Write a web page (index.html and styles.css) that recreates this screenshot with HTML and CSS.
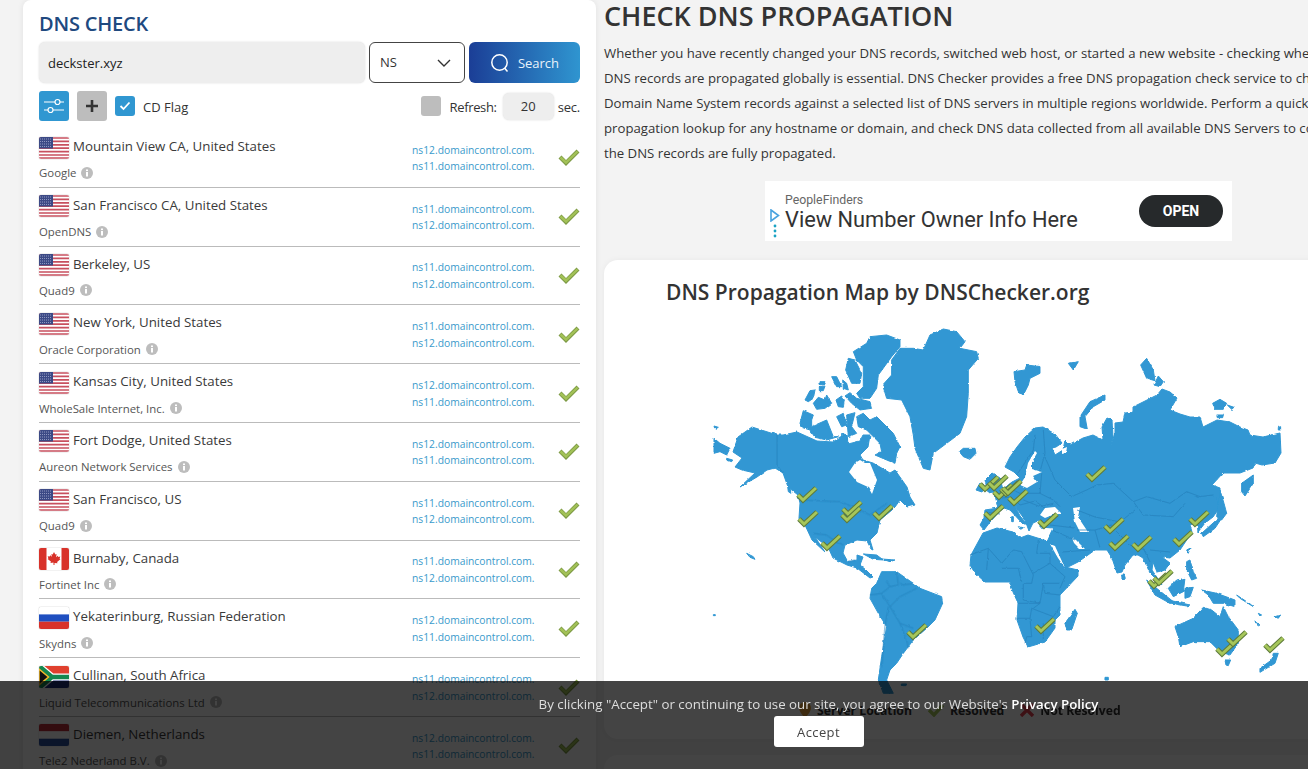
FILE: index.html
```html
<!DOCTYPE html>
<html lang="en">
<head>
<meta charset="utf-8">
<title>DNS Checker</title>
<link rel="stylesheet" href="styles.css">
</head>
<body>
<svg class="defs" width="0" height="0" aria-hidden="true">
  <defs>
    <filter id="rough" x="-2%" y="-2%" width="104%" height="104%">
      <feTurbulence type="fractalNoise" baseFrequency=".22" numOctaves="2" seed="4" result="n"/>
      <feDisplacementMap in="SourceGraphic" in2="n" scale="2.4" xChannelSelector="R" yChannelSelector="G"/>
    </filter>
    <symbol id="us" viewBox="0 0 30 22" preserveAspectRatio="none">
      <rect width="30" height="22" fill="#fff"/>
      <path d="M0 1h30M0 4.4h30M0 7.800h30M0 11.200h30M0 14.600h30M0 18h30M0 21h30" stroke="#c8505f" stroke-width="1.700"/>
      <rect width="14" height="11.500" fill="#3c4a86"/>
      <path d="M1 2h12M1 4.500h12M1 7h12M1 9.500h12" stroke="#8f97c0" stroke-width="1" stroke-dasharray="1 1"/>
    </symbol>
    <symbol id="ca" viewBox="0 0 30 22" preserveAspectRatio="none">
      <rect width="30" height="22" fill="#fff"/>
      <rect width="7.500" height="22" fill="#d8322a"/>
      <rect x="22.500" width="7.500" height="22" fill="#d8322a"/>
      <path d="M15 4l1.300 2.600 1.300-.6-.5 3.200 1.700-1.500.5 1.200 2-.3-.7 2.200.8.500-3.300 2.600.4 1.400-3-.4V17h-1v-2.500l-3 .4.400-1.400-3.300-2.600.8-.5-.7-2.200 2 .3.500-1.200 1.700 1.500L12.400 6l1.300.6z" fill="#d8322a"/>
    </symbol>
    <symbol id="ru" viewBox="0 0 30 22" preserveAspectRatio="none">
      <rect width="30" height="7.400" fill="#fff"/>
      <rect y="7.400" width="30" height="7.300" fill="#1f4fc0"/>
      <rect y="14.700" width="30" height="7.300" fill="#d8322a"/>
    </symbol>
    <symbol id="za" viewBox="0 0 30 22" preserveAspectRatio="none">
      <rect width="30" height="11" fill="#e0402e"/>
      <rect y="11" width="30" height="11" fill="#1c2f78"/>
      <path d="M0 0l13 11L0 22M13 11h17" fill="none" stroke="#fff" stroke-width="7"/>
      <path d="M0 0l13 11L0 22M13 11h17" fill="none" stroke="#14874f" stroke-width="4.500"/>
      <path d="M0 3l9.500 8L0 19z" fill="#111" stroke="#f0b92c" stroke-width="1.500"/>
    </symbol>
    <symbol id="nl" viewBox="0 0 30 22" preserveAspectRatio="none">
      <rect width="30" height="7.400" fill="#c0303a"/>
      <rect y="7.400" width="30" height="7.300" fill="#fff"/>
      <rect y="14.700" width="30" height="7.300" fill="#2a4f9c"/>
    </symbol>
    <symbol id="info" viewBox="0 0 12 12">
      <circle cx="6" cy="6" r="6" fill="#bdbdbd"/>
      <rect x="5" y="5" width="2" height="4.500" fill="#fff"/>
      <rect x="5" y="2.500" width="2" height="1.600" fill="#fff"/>
    </symbol>
    <symbol id="ok" viewBox="0 0 22 18">
      <path d="M2 9l6 6L20 3" fill="none" stroke="#7d9a45" stroke-width="4.200"/>
      <path d="M2.500 9.500l5.500 5L19.500 3.500" fill="none" stroke="#a3c257" stroke-width="2.400"/>
    </symbol>
    <g id="mk">
      <path d="M-9 1l5 5L9-6" fill="none" stroke="#5d7a3a" stroke-width="5"/>
      <path d="M-9 1l5 5L9-6" fill="none" stroke="#a6c65a" stroke-width="3"/>
    </g>
  </defs>
</svg>

<div class="page">
  <aside class="panel">
    <h2 class="panel-title">DNS CHECK</h2>
    <div class="search">
      <div class="field">deckster.xyz</div>
      <div class="select">NS
        <svg class="chev" width="14" height="8" viewBox="0 0 14 8"><path d="M1 1l6 6 6-6" fill="none" stroke="#333" stroke-width="1.400"/></svg>
      </div>
      <div class="go">
        <svg width="20" height="20" viewBox="0 0 20 20"><circle cx="9.500" cy="9.500" r="7.700" fill="none" stroke="#fff" stroke-width="1.500"/><path d="M14.500 15l3 3.500" stroke="#fff" stroke-width="1.500"/></svg>
        <span>Search</span>
      </div>
    </div>
    <div class="tools">
      <div class="tbtn blue">
        <svg width="20" height="16" viewBox="0 0 20 16"><path d="M0 4h11M16 4h4M0 12h4M9 12h11" stroke="#fff" stroke-width="1.200"/><circle cx="13.500" cy="4" r="2.500" fill="none" stroke="#fff" stroke-width="1.200"/><circle cx="6.500" cy="12" r="2.500" fill="none" stroke="#fff" stroke-width="1.200"/></svg>
      </div>
      <div class="tbtn grey">
        <svg width="14" height="14" viewBox="0 0 14 14"><path d="M7 1v12M1 7h12" stroke="#333" stroke-width="2.600"/></svg>
      </div>
      <div class="check on">
        <svg width="12" height="10" viewBox="0 0 12 10"><path d="M1.500 5l3 3 6-6.500" fill="none" stroke="#fff" stroke-width="1.800"/></svg>
      </div>
      <span class="cd">CD Flag</span>
      <div class="check off"></div>
      <span class="refresh">Refresh:</span>
      <div class="secs">20</div>
      <span class="sec">sec.</span>
    </div>

    <div class="row"><div class="loc"><svg class="flag"><use href="#us"/></svg><span class="city">Mountain View CA, United States</span></div><div class="prov">Google <svg class="i"><use href="#info"/></svg></div><div class="ns">ns12.domaincontrol.com.<br>ns11.domaincontrol.com.</div><svg class="tick"><use href="#ok"/></svg></div>
    <div class="row"><div class="loc"><svg class="flag"><use href="#us"/></svg><span class="city">San Francisco CA, United States</span></div><div class="prov">OpenDNS <svg class="i"><use href="#info"/></svg></div><div class="ns">ns11.domaincontrol.com.<br>ns12.domaincontrol.com.</div><svg class="tick"><use href="#ok"/></svg></div>
    <div class="row"><div class="loc"><svg class="flag"><use href="#us"/></svg><span class="city">Berkeley, US</span></div><div class="prov">Quad9 <svg class="i"><use href="#info"/></svg></div><div class="ns">ns11.domaincontrol.com.<br>ns12.domaincontrol.com.</div><svg class="tick"><use href="#ok"/></svg></div>
    <div class="row"><div class="loc"><svg class="flag"><use href="#us"/></svg><span class="city">New York, United States</span></div><div class="prov">Oracle Corporation <svg class="i"><use href="#info"/></svg></div><div class="ns">ns11.domaincontrol.com.<br>ns12.domaincontrol.com.</div><svg class="tick"><use href="#ok"/></svg></div>
    <div class="row"><div class="loc"><svg class="flag"><use href="#us"/></svg><span class="city">Kansas City, United States</span></div><div class="prov">WholeSale Internet, Inc. <svg class="i"><use href="#info"/></svg></div><div class="ns">ns12.domaincontrol.com.<br>ns11.domaincontrol.com.</div><svg class="tick"><use href="#ok"/></svg></div>
    <div class="row"><div class="loc"><svg class="flag"><use href="#us"/></svg><span class="city">Fort Dodge, United States</span></div><div class="prov">Aureon Network Services <svg class="i"><use href="#info"/></svg></div><div class="ns">ns12.domaincontrol.com.<br>ns11.domaincontrol.com.</div><svg class="tick"><use href="#ok"/></svg></div>
    <div class="row"><div class="loc"><svg class="flag"><use href="#us"/></svg><span class="city">San Francisco, US</span></div><div class="prov">Quad9 <svg class="i"><use href="#info"/></svg></div><div class="ns">ns11.domaincontrol.com.<br>ns12.domaincontrol.com.</div><svg class="tick"><use href="#ok"/></svg></div>
    <div class="row"><div class="loc"><svg class="flag"><use href="#ca"/></svg><span class="city">Burnaby, Canada</span></div><div class="prov">Fortinet Inc <svg class="i"><use href="#info"/></svg></div><div class="ns">ns11.domaincontrol.com.<br>ns12.domaincontrol.com.</div><svg class="tick"><use href="#ok"/></svg></div>
    <div class="row"><div class="loc"><svg class="flag"><use href="#ru"/></svg><span class="city">Yekaterinburg, Russian Federation</span></div><div class="prov">Skydns <svg class="i"><use href="#info"/></svg></div><div class="ns">ns12.domaincontrol.com.<br>ns11.domaincontrol.com.</div><svg class="tick"><use href="#ok"/></svg></div>
    <div class="row"><div class="loc"><svg class="flag"><use href="#za"/></svg><span class="city">Cullinan, South Africa</span></div><div class="prov">Liquid Telecommunications Ltd <svg class="i"><use href="#info"/></svg></div><div class="ns">ns11.domaincontrol.com.<br>ns12.domaincontrol.com.</div><svg class="tick"><use href="#ok"/></svg></div>
    <div class="row"><div class="loc"><svg class="flag"><use href="#nl"/></svg><span class="city">Diemen, Netherlands</span></div><div class="prov">Tele2 Nederland B.V. <svg class="i"><use href="#info"/></svg></div><div class="ns">ns12.domaincontrol.com.<br>ns11.domaincontrol.com.</div><svg class="tick"><use href="#ok"/></svg></div>
  </aside>

  <main class="content">
    <h1 class="headline">CHECK DNS PROPAGATION</h1>
    <p class="intro">Whether you have recently changed your DNS records, switched web host, or started a new website - checking whether your<br>DNS records are propagated globally is essential. DNS Checker provides a free DNS propagation check service to check your<br>Domain Name System records against a selected list of DNS servers in multiple regions worldwide. Perform a quick DNS<br>propagation lookup for any hostname or domain, and check DNS data collected from all available DNS Servers to confirm that<br>the DNS records are fully propagated.</p>

    <div class="ad-wrap">
      <div class="ad">
        <div class="ad-mark">
          <svg width="10" height="13" viewBox="0 0 10 13"><path d="M1 1l7.500 5.500L1 12z" fill="none" stroke="#4aa3df" stroke-width="1.600"/></svg>
          <svg width="4" height="14" viewBox="0 0 4 14"><circle cx="2" cy="2" r="1.400" fill="#1aa3c4"/><circle cx="2" cy="7" r="1.400" fill="#1aa3c4"/><circle cx="2" cy="12" r="1.400" fill="#1aa3c4"/></svg>
        </div>
        <div class="ad-copy"><div class="ad-brand">PeopleFinders</div><div class="ad-title">View Number Owner Info Here</div></div>
        <div class="ad-open">OPEN</div>
      </div>
    </div>

    <section class="map-card">
      <h3 class="map-title">DNS Propagation Map by DNSChecker.org</h3>
      <svg class="map" viewBox="604 305 704 390" width="704" height="390">
        <g class="world" filter="url(#rough)">
        <g class="land">
          <g transform="translate(700 320) scale(.3333)">
            <path d="M670 90L690 45 730 27 770 35 795 65 780 85 830 95 835 115 805 150 805 220 800 290 780 340 740 370 700 400 690 450 670 445 645 385 640 345 630 290 605 240 560 235 548 195 575 165 575 120 600 85 640 85z"/>
            <path d="M460 95L500 70 510 50 560 45 600 60 600 80 575 110 535 165 530 205 510 235 480 235 470 220 490 200 490 140 470 120z"/>
            <path d="M445 115l20 5 20 40-5 30h-25l-18-40z"/>
            <path d="M315 240l15-28 15-2-5 25-15 10zM340 250l15-18 20 8 5-15 15 25-20 15-25 3zM408 240l17-12 8 12-3 22-15-2zM435 228l15-10 20 17 40 10 5 20-35 5-25-20zM395 170h15l15 30h-15zM428 180l12 10 5 20-15-5zM360 185h15l-5 10-10-2zM358 200l17-2-5 14h-12z"/>
            <path d="M300 310l10-38 30 13-5 15v20l45-20 20 50h15l-35 10-35-8-15-22-25-8z"/>
            <path d="M410 290l20-10 10 35-15 5zM440 285l25-7-10 42 15 20-25 10zM425 340l15 5 3 15-18-3z"/>
            <path d="M470 290l20-10 20 20 20-10 50 50 20 40-10 20-5 30-25-10-35-15 20-10-5-25-40-40-25-10z"/>
            <path d="M778 395l12-10h35l3 15-18 18-20-8z"/>
            <path d="M42 318l13 4-10 6z"/>
            <path d="M42 355l18 15 30 15-10 20-20-10-18 5z"/>
            <path d="M80 415l18 5-3 5-15-5zM263 500l7 5 3 15-8-5z"/>
          </g>
          <path d="M733 452L738 437 752 427 777 435 783 435 797 432 817 441 833 442 840 437 847 435 848 444 860 441 863 435 870 435 868 447 860 455 863 460 873 463 890 473 895 470 907 487 910 497 915 505 907 507 900 500 895 507 892 510 880 520 877 533 870 540 873 550 871 549 867 541 857 540 845 545 843 553 848 562 857 560 857 555 863 557 860 565 866 570 873 577 870 578 857 568 847 565 833 558 828 547 815 537 825 552 812 540 805 525 799 518 800 503 798 495 788 487 783 473 775 468 767 470 757 477 740 487 755 473 742 470 735 467 742 458z"/>
          <g transform="translate(700 480) scale(.3333)">
            <path d="M545 275h45l50 35 20 15 65 25 3 20-23 50-25 25-40 35-30 40-20 30-20 20-10 30 20 40h-30l-15-40 10-70 15-90-25-40-25-45 5-30 15-15z"/>
            <path d="M140 220l20 10 5 8-15-6zM40 404h6v3h-6zM490 222l40 3 20 15-30-2zM545 237l40 3-15 5z"/>
            <path d="M604 612h16l-2 5h-14z"/>
          </g>
          <path d="M1005 467L1010 457 1017 447 1025 437 1035 428 1043 427 1055 434 1062 443 1056 447 1052 448 1055 455 1063 450 1065 440 1070 445 1083 438 1093 435 1103 440 1102 427 1107 418 1112 420 1113 437 1110 448 1115 433 1115 423 1123 422 1125 413 1133 412 1133 407 1147 400 1157 395 1162 389 1170 392 1177 398 1170 410 1180 414 1190 417 1200 417 1203 427 1217 420 1230 422 1240 427 1248 430 1250 435 1263 437 1280 433 1281 453 1275 463 1262 465 1255 463 1253 468 1240 473 1223 473 1212 485 1220 488 1220 507 1213 517 1205 523 1198 532 1197 522 1190 525 1192 532 1180 550 1170 558 1162 557 1170 563 1165 570 1157 572 1153 562 1152 570 1162 585 1150 573 1143 558 1138 555 1133 555 1125 565 1122 572 1117 573 1112 558 1107 550 1095 550 1088 555 1078 562 1066 568 1060 562 1052 545 1047 541 1053 528 1040 527 1040 520 1033 523 1029 531 1025 520 1015 506 1020 516 1027 524 1023 524 1010 510 1004 508 1000 511 990 522 984 530 980 525 984 518 985 510 998 508 995 495 992 491 1002 490 1012 482 1020 478 1014 472z"/>
          <path d="M983 533L997 528 1013 532 1020 538 1028 535 1047 541 1053 543 1058 553 1065 567 1078 570 1078 576 1060 595 1060 615 1055 620 1055 628 1045 642 1028 647 1023 637 1017 620 1018 603 1013 592 1010 582 985 582 975 573 970 565 971 555z"/>
          <g transform="translate(840 500) scale(.3333)">
            <path d="M705 328l7 12-17 50h-15l-5-20z"/>
            <path d="M1130 -10l10 10 10 25 10 15-20 10-5-10zM1135 55h10l-20 30-35 25-5-10zM1040 150l10-5-5 15zM1040 185l10-5 10 35 10 20-15 5-15-30z"/>
            <path d="M920 240l30 25 50 40-10 5-45-25zM985 300l65 15-10 3-55-10zM985 265l25-25 25-5-5 40-30 15zM1035 265l25-3-10 28-15 5zM1085 270l45 10 55 20v20l-35-10h-30l-15-25zM1190 285l45 30 5 5-40-25z"/>
            <path d="M1005 380l55-25 30-33 25 8 25 20 10-30 15 30 30 40v40l-25 35-30-10-30-30h-50l-40 15-5-30z"/>
            <path d="M1155 480h17l-7 17-7-2zM1300 460h15l-10 30-45 27v-12l35-25zM1245 365l15 10-5 3zM1255 340l10 5-5 3zM1305 350l17-5-7 10zM795 532h10v8h-10z"/>
            <path d="M845 225l8 0 3 10-4 5-6-6zM515 50l5 0 0 15-5 0zM535 80l15 3-8 5z"/>
          </g>
          <path d="M985 480l7-7 8 5 3 12-15 3zM976 490l4-7 5 4-3 5z"/>
          <g transform="translate(1000 320) scale(.3333)">
            <path d="M42 155l33-5 5-15 40 5v20l-30 15-5 20-15 30-15-10-10-30zM205 130l30-5-15 25zM240 320v-30l30-45 45-20v15l-35 20-25 30 7 38zM422 135l18-20 20 35 5 32-25-7zM462 195l13-27 15 17-10 15zM638 250l22-12 20 12-10 18h-25zM682 255l20 7-7 6zM650 285h20l-2 8h-16zM835 322l7-2v10h-7z"/>
            <path d="M725 490l35-25v25l-25 38-10-13zM660 510l12 40 8 30-15 20-15-10z"/>
          </g>
        </g>
        <g class="water">
          <path d="M849 472L855 463 860 460 865 463 870 463 877 480 872 494 868 487 857 482z"/>
          <path d="M1035 451L1028 463 1025 477 1020 485 1027 488 1037 482 1033 476 1042 472 1032 469 1032 462 1037 453z"/>
          <path d="M1045 508L1055 507 1062 514 1055 514 1045 518 1040 515zM1073 508L1080 507 1078 517 1088 532 1080 532 1075 522z"/>
          <path d="M1072 538L1076 540 1085 549 1080 549 1074 543zM1050 544L1055 546 1065 568 1058 558z"/>
          <path d="M1062 449l5-2-1 6-4 1z"/>
        </g>
        <g class="borders">
          <path d="M777 435V465L783 473"/>
          <g transform="translate(700 480) scale(.3333)">
            <path d="M300 60L420 65 470 85 510 105 560 70M340 160L380 165 400 180 430 195M445 245L465 240"/>
            <path d="M560 305L570 320 545 340 510 345M590 275L595 315 570 320M640 310L610 315 600 310M570 380L545 340M570 380L600 430 640 445M565 380L555 440 545 560M600 430L620 480 625 505M650 325L600 350 570 380"/>
          </g>
          <g transform="translate(960 540) scale(.3333)">
            <path d="M30 45L85 25 125 70 160 30M85 25L80 90M125 85L175 85 185 125M160 30L185 35 220 105 215 130 190 130 190 180 240 190 250 130 300 130M235 0L230 40 270 40 270 70 220 100M270 70L315 110 300 145M250 130L255 160 300 165M175 190L240 190 220 205M170 235L210 235 215 205 280 230 300 200M210 235L215 290 200 290 195 310M250 250L250 300"/>
          </g>
          <g transform="translate(1000 320) scale(.3333)">
            <path d="M130 400L165 480 215 530 260 510 290 495 340 490 400 545 440 530 510 550 560 515 600 530 640 525M400 545L430 585 520 590 555 550M105 345L100 390 50 465M130 330L135 400 120 455M125 460L120 520 160 540 180 560M20 500L60 520 120 520M70 540L120 560 160 550"/>
          </g>
          <path d="M985 512L1000 514M1002 498L1012 497 1020 505 1035 501 1045 508M1077 510L1095 517 1120 522 1135 510M1077 530L1095 530 1100 548M1095 530L1112 525M1115 530L1130 545 1145 550M1143 548L1150 562M1150 550L1170 552M1052 530L1075 540M1050 525L1075 528M1062 552L1090 550"/>
        </g>
        </g>
        <use href="#mk" x="807" y="494"/><use href="#mk" x="808" y="518"/><use href="#mk" x="852" y="508"/><use href="#mk" x="851" y="514"/><use href="#mk" x="883" y="512"/><use href="#mk" x="831" y="542"/><use href="#mk" x="917" y="631"/><use href="#mk" x="989" y="483"/><use href="#mk" x="998" y="482"/><use href="#mk" x="1003" y="491"/><use href="#mk" x="1010" y="488"/><use href="#mk" x="1012" y="487"/><use href="#mk" x="1018" y="497"/><use href="#mk" x="994" y="512"/><use href="#mk" x="1048" y="520"/><use href="#mk" x="1096" y="473"/><use href="#mk" x="1114" y="525"/><use href="#mk" x="1119" y="542"/><use href="#mk" x="1142" y="543"/><use href="#mk" x="1183" y="538"/><use href="#mk" x="1199" y="518"/><use href="#mk" x="1158" y="580"/><use href="#mk" x="1163" y="577"/><use href="#mk" x="1045" y="625"/><use href="#mk" x="1226" y="648"/><use href="#mk" x="1237" y="638"/><use href="#mk" x="1274" y="644"/>
      </svg>
      <div class="legend">
        <span class="key">
          <svg width="12" height="16" viewBox="0 0 12 16"><path d="M6 0a6 6 0 0 1 6 6c0 4-6 10-6 10S0 10 0 6a6 6 0 0 1 6-6z" fill="#e8a33c"/></svg>Server Location</span>
        <span class="key">
          <svg width="16" height="14" viewBox="0 0 16 14"><path d="M1 7l5 5 9-10" fill="none" stroke="#a6c65a" stroke-width="3.400"/></svg>Resolved</span>
        <span class="key">
          <svg width="14" height="14" viewBox="0 0 14 14"><path d="M1 1l12 12M13 1L1 13" stroke="#e64250" stroke-width="3.400"/></svg>Not Resolved</span>
      </div>
    </section>
    <section class="next-card"></section>
  </main>
</div>

<div class="consent">
  <div class="consent-text">By clicking "Accept" or continuing to use our site, you agree to our Website's <a class="policy">Privacy Policy</a></div>
  <div class="accept">Accept</div>
</div>
</body>
</html>
```

FILE: styles.css
```css
* { box-sizing: border-box; }
html, body { margin: 0; height: 100%; overflow: hidden; }
body { background: #f3f3f3; font-family: "Open Sans", "Noto Sans", sans-serif; color: #333; }
.defs { position: absolute; }
.page { display: flex; gap: 8px; padding-left: 23px; width: 1600px; height: 769px; overflow: hidden; }

.panel { width: 573px; flex: none; background: #fff; border-radius: 8px 8px 0 0; padding: 0 16px; height: 800px; box-shadow: 0 0 6px rgba(0,0,0,.08); }
.panel-title { margin: 0; height: 42px; line-height: 47px; font-size: 20px; font-weight: 600; color: #20497f; letter-spacing: -.2px; }
.search { display: flex; gap: 4px; height: 41px; font-size: 13px; }
.field { width: 326px; background: #eee; border-radius: 6px; padding-left: 9px; line-height: 43px; color: #222; box-shadow: 0 0 2px rgba(0,0,0,.15); }
.select { width: 96px; border: 1px solid #444; border-radius: 6px; padding-left: 10px; line-height: 39px; display: flex; justify-content: space-between; align-items: center; }
.chev { margin-right: 13px; }
.go { width: 111px; border-radius: 6px; background: linear-gradient(90deg, #1b3e96, #2f95d0); color: #e8f2fa; display: flex; align-items: center; justify-content: center; gap: 8px; }
.tools { display: flex; align-items: center; height: 30px; margin: 8px 0; font-size: 13px; }
.tools span { padding-top: 2px; }
.tbtn { width: 30px; height: 30px; border-radius: 3px; display: flex; align-items: center; justify-content: center; margin-right: 8px; }
.blue { background: #3097d1; }
.grey { background: #bdbdbd; }
.check { width: 20px; height: 20px; border-radius: 3px; display: flex; align-items: center; justify-content: center; }
.on { background: #3097d1; }
.off { background: #bdbdbd; margin-left: auto; }
.cd { margin-left: 8px; }
.refresh { margin-left: 9px; letter-spacing: -.35px; }
.secs { width: 51px; height: 27px; margin-left: 6px; background: #eee; border-radius: 6px; text-align: center; line-height: 27px; box-shadow: 0 0 2px rgba(0,0,0,.15); }
.sec { margin-left: 4px; letter-spacing: -.2px; }

.row { height: 58.8px; border-bottom: 1px solid #bbb; display: grid; grid-template-columns: 1fr 122px 46px; grid-template-rows: 33px 1fr; }
.loc { display: flex; align-items: center; gap: 4px; grid-column: 1; grid-row: 1; padding-top: 4px; }
.flag { width: 30px; height: 22px; border-radius: 2px; box-shadow: 0 0 1px rgba(0,0,0,.5); flex: none; }
.city { font-size: 13.300px; color: #3a3a3a; position: relative; top: -1.500px; }
.prov { grid-column: 1; grid-row: 2; font-size: 11.400px; color: #555; display: flex; align-items: center; gap: 5px; padding-bottom: 3px; }
.i { width: 12px; height: 12px; }
.ns { grid-column: 2; grid-row: 1 / 3; align-self: center; font-size: 10.300px; line-height: 16.500px; color: #3a9acb; white-space: nowrap; margin-top: 1px; }
.tick { grid-column: 3; grid-row: 1 / 3; align-self: center; justify-self: end; width: 22px; height: 18px; margin-top: -1px; }

.content { width: 960px; flex: none; }
.headline { margin: 0; font-size: 27px; font-weight: 600; line-height: 32px; color: #333; }
.intro { margin: 9px 0 0; font-size: 13.200px; line-height: 25px; color: #333; white-space: nowrap; }
.ad-wrap { margin-top: 15px; padding-left: 161px; }
.ad { width: 467px; height: 60px; background: #fff; display: flex; align-items: center; font-family: Roboto, sans-serif; }
.ad-mark { width: 20px; display: flex; flex-direction: column; align-items: center; gap: 2px; padding-top: 24px; }
.ad-copy { flex: 1; padding-top: 4px; }
.ad-brand { font-size: 12.300px; color: #666; line-height: 14px; }
.ad-title { font-size: 21.800px; color: #333; line-height: 26px; }
.ad-open { width: 84px; height: 32px; border-radius: 16px; background: #26292b; color: #fff; font-size: 14px; font-weight: 700; text-align: center; line-height: 33px; margin-right: 9px; }

.map-card { margin-top: 19px; height: 479px; background: #fff; border-radius: 14px; box-shadow: 0 0 6px rgba(0,0,0,.05); }
.map-title { margin: 0; height: 45px; padding: 17px 0 0 62px; font-size: 21px; line-height: 30px; font-weight: 600; color: #333; }
.map { display: block; }
.land { fill: #3097d3; stroke: #3097d3; stroke-linejoin: round; }
.land path { stroke-width: 1; vector-effect: non-scaling-stroke; }
.water { fill: #fff; }
.borders { fill: none; stroke: #2a83be; }
.borders path { stroke-width: .8; vector-effect: non-scaling-stroke; }
.legend { display: flex; align-items: center; height: 30px; padding-left: 195px; gap: 16px; font-size: 12.200px; font-weight: 700; color: #333; }
.key { display: flex; align-items: center; gap: 6px; }
.next-card { margin-top: 16px; height: 200px; background: #fff; border-radius: 14px; }

.consent { position: fixed; left: 0; right: 0; bottom: 0; height: 88px; background: rgba(0,0,0,.735); display: flex; flex-direction: column; align-items: center; padding: 14px 0 0 329px; color: #ddd; font-size: 13.300px; }
.consent-text { line-height: 18px; }
.policy { color: #fff; font-weight: 600; }
.accept { margin-top: 3px; width: 90px; height: 31px; background: #fff; border-radius: 3px; color: #444; font-size: 13px; text-align: center; line-height: 32px; letter-spacing: .4px; }
```
